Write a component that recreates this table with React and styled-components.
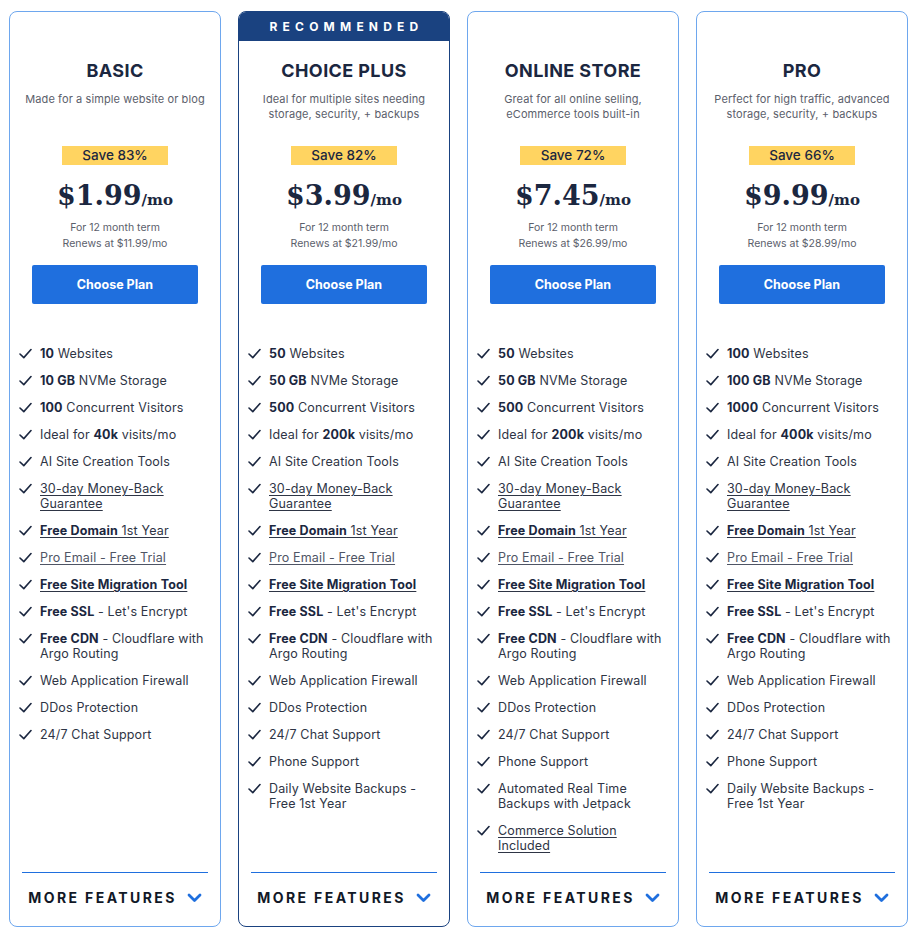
import styled, { createGlobalStyle } from 'styled-components';

const GlobalStyle = createGlobalStyle`
  body {
    margin: 0;
    background: #fff;
    font-family: 'Inter', 'Open Sans', sans-serif;
    color: #2e3545;
  }
`;

const common = (p) => [
  { text: <><b>{p.sites}</b> Websites</> },
  { text: <><b>{p.storage}</b> NVMe Storage</> },
  { text: <><b>{p.visitors}</b> Concurrent Visitors</> },
  { text: <>Ideal for <b>{p.visits}</b> visits/mo</> },
  { text: <>AI Site Creation Tools</> },
  { text: <>30-day Money-Back Guarantee</>, link: true },
  { text: <><b>Free Domain</b> 1st Year</>, link: true },
  { text: <>Pro Email - Free Trial</>, link: true, muted: true },
  { text: <><b>Free Site Migration Tool</b></>, link: true },
  { text: <><b>Free SSL</b> - Let's Encrypt</> },
  { text: <><b>Free CDN</b> - Cloudflare with Argo Routing</> },
  { text: <>Web Application Firewall</> },
  { text: <>DDos Protection</> },
  { text: <>24/7 Chat Support</> },
];

const plans = [
  {
    name: 'BASIC',
    desc: 'Made for a simple website or blog',
    save: 'Save 83%',
    price: '$1.99',
    renew: 'Renews at $11.99/mo',
    features: common({ sites: '10', storage: '10 GB', visitors: '100', visits: '40k' }),
  },
  {
    name: 'CHOICE PLUS',
    desc: 'Ideal for multiple sites needing storage, security, + backups',
    save: 'Save 82%',
    price: '$3.99',
    renew: 'Renews at $21.99/mo',
    recommended: true,
    features: [
      ...common({ sites: '50', storage: '50 GB', visitors: '500', visits: '200k' }),
      { text: <>Phone Support</> },
      { text: <>Daily Website Backups - Free 1st Year</> },
    ],
  },
  {
    name: 'ONLINE STORE',
    desc: 'Great for all online selling, eCommerce tools built-in',
    save: 'Save 72%',
    price: '$7.45',
    renew: 'Renews at $26.99/mo',
    features: [
      ...common({ sites: '50', storage: '50 GB', visitors: '500', visits: '200k' }),
      { text: <>Phone Support</> },
      { text: <>Automated Real Time Backups with Jetpack</> },
      { text: <>Commerce Solution Included</>, link: true },
    ],
  },
  {
    name: 'PRO',
    desc: 'Perfect for high traffic, advanced storage, security, + backups',
    save: 'Save 66%',
    price: '$9.99',
    renew: 'Renews at $28.99/mo',
    features: [
      ...common({ sites: '100', storage: '100 GB', visitors: '1000', visits: '400k' }),
      { text: <>Phone Support</> },
      { text: <>Daily Website Backups - Free 1st Year</> },
    ],
  },
];

const Grid = styled.div`
  display: grid;
  grid-template-columns: repeat(4, 212px);
  gap: 17px;
  padding: 11px 0 0 9px;
`;

const Card = styled.div`
  display: flex;
  flex-direction: column;
  border: 1px solid ${(p) => (p.$featured ? '#1a4280' : '#6ea7ee')};
  border-radius: 8px;
  overflow: hidden;
  box-sizing: border-box;
`;

const Ribbon = styled.div`
  height: 29px;
  background: ${(p) => (p.$show ? '#1a4280' : 'transparent')};
  color: #fff;
  font-size: 12px;
  font-weight: 700;
  letter-spacing: 5.2px;
  text-align: center;
  line-height: 29px;
  padding-left: 5px;
`;

const Title = styled.h2`
  margin: 19px 0 0;
  font-size: 18px;
  font-weight: 700;
  letter-spacing: 0.4px;
  color: #1b2740;
  text-align: center;
  line-height: 22px;
`;

const Desc = styled.p`
  margin: 10px auto 0;
  width: 186px;
  min-height: 30px;
  font-size: 11px;
  letter-spacing: 0.1px;
  line-height: 15px;
  color: #5b606b;
  text-align: center;
`;

const Badge = styled.div`
  align-self: center;
  margin-top: 24px;
  width: 106px;
  height: 19px;
  background: #ffd461;
  color: #1b2740;
  font-size: 13.5px;
  font-weight: 500;
  line-height: 19px;
  text-align: center;
`;

const Price = styled.div`
  margin-top: 15px;
  text-align: center;
  font-family: 'DejaVu Serif', 'Liberation Serif', serif;
  font-weight: 700;
  font-size: 27px;
  line-height: 32px;
  color: #1b2740;
  span {
    font-size: 15px;
  }
`;

const Term = styled.div`
  margin-top: 4px;
  text-align: center;
  font-size: 10.5px;
  line-height: 16px;
  color: #5b606b;
`;

const Button = styled.button`
  align-self: center;
  margin-top: 13px;
  width: 166px;
  height: 39px;
  border: none;
  border-radius: 2px;
  background: #1f6fde;
  color: #fff;
  font-family: inherit;
  font-size: 12.5px;
  font-weight: 700;
`;

const List = styled.ul`
  list-style: none;
  margin: 42px 0 0;
  padding: 0 12px 0 9px;
  flex: 1;
  display: flex;
  flex-direction: column;
  gap: 12px;
`;

const Item = styled.li`
  display: flex;
  align-items: flex-start;
  gap: 8px;
  font-size: 12.5px;
  letter-spacing: 0.15px;
  line-height: 15px;
  color: #2e3545;
  svg {
    flex: none;
    margin-top: 2px;
  }
`;

const ItemText = styled.span`
  text-decoration: ${(p) => (p.$link ? 'underline' : 'none')};
  text-underline-offset: 2px;
  color: ${(p) => (p.$muted ? '#4f5565' : 'inherit')};
  b {
    font-weight: 700;
    color: #1b2740;
  }
`;

const Footer = styled.div`
  margin: 19px 12px 0;
  border-top: 1px solid #1f6fde;
  padding: 17px 0 20px;
  display: flex;
  justify-content: center;
  align-items: center;
  gap: 10px;
  font-size: 14px;
  font-weight: 700;
  letter-spacing: 2.4px;
  color: #111827;
  line-height: 16px;
`;

const Check = () => (
  <svg width="13" height="11" viewBox="0 0 13 11">
    <polyline points="1,6 4.8,9.6 12,1.5" fill="none" stroke="#1b2740" strokeWidth="1.6" strokeLinecap="round" strokeLinejoin="round" />
  </svg>
);

const Chevron = () => (
  <svg width="15" height="10" viewBox="0 0 15 10">
    <polyline points="2,2 7.5,7.5 13,2" fill="none" stroke="#1f6fde" strokeWidth="2.8" strokeLinecap="round" strokeLinejoin="round" />
  </svg>
);

const App = () => (
  <>
    <GlobalStyle />
    <Grid>
      {plans.map((p) => (
        <Card key={p.name} $featured={p.recommended}>
          <Ribbon $show={p.recommended}>{p.recommended ? 'RECOMMENDED' : ''}</Ribbon>
          <Title>{p.name}</Title>
          <Desc>{p.desc}</Desc>
          <Badge>{p.save}</Badge>
          <Price>
            {p.price}
            <span>/mo</span>
          </Price>
          <Term>
            For 12 month term
            <br />
            {p.renew}
          </Term>
          <Button>Choose Plan</Button>
          <List>
            {p.features.map((f, i) => (
              <Item key={i}>
                <Check />
                <ItemText $link={f.link} $muted={f.muted}>{f.text}</ItemText>
              </Item>
            ))}
          </List>
          <Footer>
            MORE FEATURES
            <Chevron />
          </Footer>
        </Card>
      ))}
    </Grid>
  </>
);

export default App;
